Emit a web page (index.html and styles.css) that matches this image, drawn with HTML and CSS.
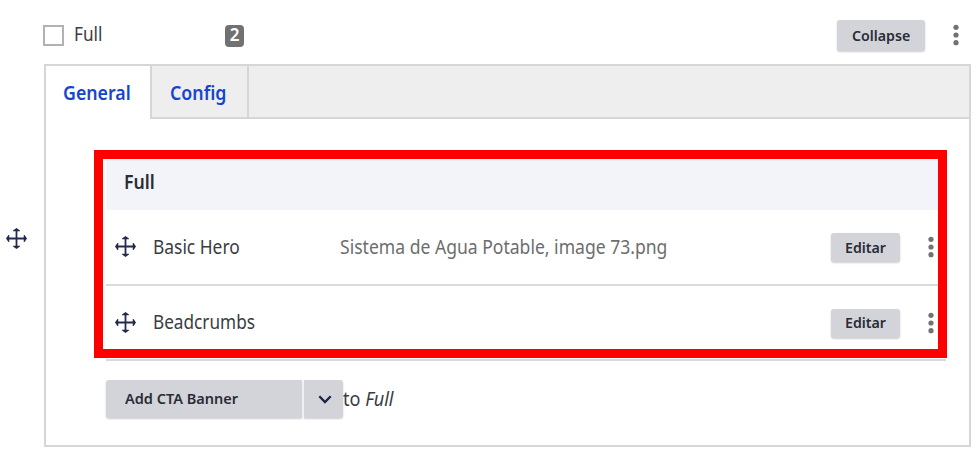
FILE: index.html
```
<!DOCTYPE html>
<html lang="es">
<head>
<meta charset="utf-8">
<title>Full</title>
<link rel="stylesheet" href="styles.css">
</head>
<body>
<svg width="0" height="0" class="defs">
  <symbol id="move" viewBox="0 0 20 20"><path d="M10 1.500v17M1.500 10h17" fill="none" stroke="#222b4d" stroke-width="1.700"/><path d="M10 0l3.300 2.300v.8H6.700v-.8zM10 20l-3.300-2.300v-.8h6.600v.8zM0 10l2.300-3.300h.8v6.600h-.8zM20 10l-2.300 3.300h-.8V6.700h.8z" fill="#222b4d"/></symbol>
  <symbol id="dots" viewBox="0 0 6 22"><g fill="#727272"><circle cx="3" cy="3.300" r="2.600"/><circle cx="3" cy="11" r="2.600"/><circle cx="3" cy="18.700" r="2.600"/></g></symbol>
</svg>
<div class="page">
  <div class="rail"><svg class="move"><use href="#move"/></svg></div>
  <main>
    <header class="top">
      <span class="check"></span>
      <span class="name"><span class="t t-full">Full</span></span>
      <span class="count">2</span>
      <button class="btn collapse"><span class="t t-collapse">Collapse</span></button>
      <svg class="dots"><use href="#dots"/></svg>
    </header>
    <section class="panel">
      <nav class="tabs">
        <a class="tab active"><span class="t t-tab">General</span></a>
        <a class="tab config"><span class="t t-tab">Config</span></a>
      </nav>
      <div class="content">
        <div class="head"><span class="t t-head">Full</span></div>
        <div class="row">
          <svg class="move"><use href="#move"/></svg>
          <span class="label"><span class="t t-hero">Basic Hero</span></span>
          <span class="summary"><span class="t t-sum">Sistema de Agua Potable, image 73.png</span></span>
          <button class="btn edit"><span class="t t-edit">Editar</span></button>
          <svg class="dots"><use href="#dots"/></svg>
        </div>
        <div class="row last">
          <svg class="move"><use href="#move"/></svg>
          <span class="label"><span class="t t-bread">Beadcrumbs</span></span>
          <span class="summary"></span>
          <button class="btn edit"><span class="t t-edit">Editar</span></button>
          <svg class="dots"><use href="#dots"/></svg>
        </div>
        <div class="add">
          <button class="btn main"><span class="t t-add">Add CTA Banner</span></button>
          <button class="btn more"><svg width="14" height="9" viewBox="0 0 14 9"><path d="M1.300 1.200L7 7l5.700-5.800" fill="none" stroke="#1b2447" stroke-width="2.300"/></svg></button>
          <span class="dest"><span class="t t-to">to <em>Full</em></span></span>
        </div>
      </div>
    </section>
  </main>
</div>
<div class="highlight"></div>
</body>
</html>
```
FILE: styles.css
```
* { box-sizing: border-box; }
body { margin: 0; width: 976px; height: 466px; overflow: hidden; background: #fff; color: #3a3c42; font: 19px/24px "Noto Sans", sans-serif; }
.defs { position: absolute; }
.page { display: grid; grid-template-columns: 44px 927px; height: 466px; }
.rail { padding: 228px 0 0 6px; }
.move { display: block; width: 21px; height: 21px; }
.dots { display: block; width: 6px; height: 22px; }
.t { display: inline-block; white-space: nowrap; transform-origin: 0 50%; }
.top { display: flex; align-items: flex-start; height: 64px; }
.check { width: 21px; height: 21px; margin: 25px 0 0 -1px; border: 2px solid #b2b2b2; background: #fff; }
.name { width: 151px; margin: 22px 0 0 10px; }
.count { width: 19px; height: 22px; margin-top: 25px; border-radius: 4px; background: #717171; color: #fff; font-size: 17px; font-weight: 600; line-height: 20px; text-align: center; }
.btn { display: block; border: 0; padding: 0 0 2px; border-radius: 3px; background: #d3d4da; box-shadow: 0 1px 2px #0003; color: #292c36; font: 600 15px/22px "Noto Sans", sans-serif; text-align: left; }
.collapse { width: 88px; height: 31px; margin: 20px 0 0 593px; padding-left: 15px; }
.top .dots { margin: 24px 0 0 28px; }
.panel { height: 383px; border: 2px solid #d6d6d6; }
.tabs { display: flex; height: 53px; background: #eee; box-shadow: inset 0 -2px #d6d6d6; }
.tab { height: 53px; padding: 15px 0 0 17px; border-right: 2px solid #d6d6d6; color: #1545cf; font-weight: 650; }
.active { width: 106px; background: #fff; }
.config { width: 97px; padding-left: 18px; box-shadow: inset 0 -2px #d6d6d6; }
.content { width: 840px; margin: 32px 0 0 60px; }
.head { height: 59px; padding: 19px 0 0 18px; background: #f3f4f9; color: #292c36; font-weight: 650; }
.row { display: grid; grid-template-columns: 37px 187px 491px 98px 6px; align-items: center; height: 76px; padding-left: 9px; border-bottom: 2px solid #dadadd; }
.last { height: 75px; }
.row .move { margin-top: -1px; }
.row .label { margin-top: -1px; padding-left: 1px; }
.row .summary { margin-top: -1px; padding-left: 1px; color: #6d6d6d; }
.edit { width: 69px; height: 29px; margin-left: 1px; padding-left: 14px; margin-top: 1px; }
.add { display: flex; padding-top: 19px; }
.main { width: 196px; height: 38px; padding-left: 19px; border-radius: 3px 0 0 3px; }
.more { width: 39px; height: 38px; margin-left: 2px; padding: 0 0 3px 14px; border-radius: 0 3px 3px 0; }
.dest { padding-top: 7px; }
.highlight { position: absolute; left: 94px; top: 150px; width: 853px; height: 208px; border: 9px solid #f00; }
.t-full, .t-bread { transform: scaleX(.905); }
.t-hero { transform: scaleX(.915); }
.t-sum { transform: scaleX(.924); }
.t-tab { transform: scaleX(.935); }
.t-head { transform: scaleX(.93); }
.t-to { transform: scaleX(.95); }
.t-collapse, .t-edit { transform: scaleX(.945); }
.t-add { transform: scaleX(.968); }
```
